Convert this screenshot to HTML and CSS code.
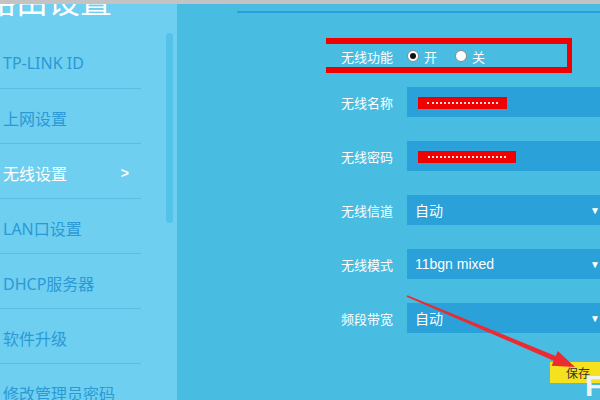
FILE: index.html
```html
<!DOCTYPE html>
<html lang="zh-CN">
<head>
<meta charset="utf-8">
<title>路由设置</title>
<link rel="stylesheet" href="styles.css">
</head>
<body>
<div class="topbar"></div>
<div class="app">
  <aside class="sidebar">
    <div class="title">路由设置</div>
    <ul class="menu">
      <li class="item">TP-LINK ID</li>
      <li class="item">上网设置</li>
      <li class="item active"><span>无线设置</span><span class="chev">&gt;</span></li>
      <li class="item">LAN口设置</li>
      <li class="item">DHCP服务器</li>
      <li class="item">软件升级</li>
      <li class="item">修改管理员密码</li>
    </ul>
    <div class="scrollbar"></div>
  </aside>
  <main class="main">
    <div class="rule"></div>
    <div class="form">
      <div class="row highlight">
        <span class="label">无线功能</span>
        <span class="radios">
          <span class="radio checked"></span><span class="rtext">开</span>
          <span class="radio"></span><span class="rtext">关</span>
        </span>
      </div>
      <div class="row field">
        <span class="label">无线名称</span>
        <span class="input"><span class="mask mask-a"><span class="dots"></span></span></span>
      </div>
      <div class="row field">
        <span class="label">无线密码</span>
        <span class="input"><span class="mask mask-b"><span class="dots"></span></span></span>
      </div>
      <div class="row field">
        <span class="label">无线信道</span>
        <span class="input select"><span>自动</span><span class="caret">▼</span></span>
      </div>
      <div class="row field">
        <span class="label">无线模式</span>
        <span class="input select"><span>11bgn mixed</span><span class="caret">▼</span></span>
      </div>
      <div class="row field">
        <span class="label">频段带宽</span>
        <span class="input select"><span>自动</span><span class="caret">▼</span></span>
      </div>
    </div>
    <div class="actions"><button class="save">保存</button></div>
    <svg class="arrow" width="423" height="396" viewBox="177 4 423 396">
      <polygon fill="#ec2a32" points="407.4,299.3 555.7,360.1 557.8,355.0 575,371 551.6,369.8 553.7,364.7 406.6,300.7"/>
    </svg>
    <span class="mark">F</span>
  </main>
</div>
</body>
</html>
```
FILE: styles.css
```css
html, body {
  margin: 0;
  padding: 0;
  width: 600px;
  height: 400px;
  overflow: hidden;
  font-family: "Noto Sans", "Noto Sans CJK SC", sans-serif;
}
.topbar {
  height: 4px;
  background: #c3c3c3;
}
.app {
  display: flex;
  height: 396px;
}
.sidebar {
  position: relative;
  width: 177px;
  flex: none;
  background: #6ecff0;
  overflow: hidden;
}
.title {
  margin-top: -21px;
  margin-left: -16px;
  font-size: 32px;
  line-height: 32px;
  color: #ffffff;
  font-family: "Noto Sans CJK SC", sans-serif;
  white-space: nowrap;
}
.menu {
  list-style: none;
  margin: 19px 0 0 0;
  padding: 0;
  width: 141px;
}
.item {
  box-sizing: border-box;
  height: 55px;
  padding: 4px 10px 0 3px;
  border-bottom: 1px solid #58bee6;
  display: flex;
  align-items: center;
  justify-content: space-between;
  font-size: 16px;
  color: #2b99d5;
  white-space: nowrap;
}
.item.active {
  color: #ffffff;
}
.chev {
  font-size: 14px;
  font-family: "Liberation Sans", sans-serif;
  font-weight: bold;
  margin-right: 2px;
}
.scrollbar {
  position: absolute;
  left: 166px;
  top: 29px;
  width: 7px;
  height: 190px;
  border-radius: 4px;
  background: #55c2e8;
}
.main {
  position: relative;
  flex: 1;
  background: #48bde1;
  overflow: hidden;
}
.rule {
  margin: 7px 0 0 60px;
  height: 2px;
  background: #2c9fd7;
}
.form {
  margin: 25px 0 0 149px;
  display: flex;
  flex-direction: column;
}
.row {
  display: flex;
  align-items: center;
  gap: 14px;
}
.label {
  width: 67px;
  flex: none;
  text-align: right;
  font-size: 13px;
  color: #ffffff;
  white-space: nowrap;
}
.highlight {
  box-sizing: border-box;
  width: 246px;
  height: 35px;
  border-top: 6px solid #f10000;
  border-bottom: 6px solid #f10000;
  border-right: 5px solid #f10000;
  padding-top: 1px;
}
.radios {
  display: flex;
  align-items: center;
  color: #ffffff;
  font-size: 13px;
}
.radio {
  box-sizing: border-box;
  width: 12px;
  height: 12px;
  border-radius: 50%;
  background: #ffffff;
  border: 1px solid #8a8a8a;
  display: flex;
  align-items: center;
  justify-content: center;
}
.radio.checked::after {
  content: "";
  width: 6px;
  height: 6px;
  border-radius: 50%;
  background: #111111;
}
.rtext {
  margin: 0 18px 0 5px;
}
.field {
  margin-top: 14px;
}
.field + .field {
  margin-top: 24px;
}
.input {
  box-sizing: border-box;
  width: 197px;
  height: 30px;
  flex: none;
  background: #2aa1d9;
  display: flex;
  align-items: center;
  padding: 0 4px 0 8px;
  color: #ffffff;
  font-size: 14px;
  font-family: "Liberation Sans", "Noto Sans CJK SC", sans-serif;
}
.select {
  justify-content: space-between;
}
.caret {
  font-size: 10px;
}
.mask {
  margin-left: 3px;
  margin-top: 1px;
  height: 12px;
  background: #f20000;
  display: flex;
  align-items: center;
  justify-content: center;
}
.mask-a { width: 89px; }
.mask-b { width: 98px; }
.dots {
  width: 80%;
  border-top: 2px dotted #f8e0e0;
}
.actions {
  margin: 29px 0 0 373px;
}
.save {
  width: 56px;
  height: 21px;
  border: none;
  padding: 0;
  background: #f6e11e;
  color: #333333;
  font-size: 12px;
  font-family: "Noto Sans CJK SC", sans-serif;
  display: block;
}
.arrow {
  position: absolute;
  left: 0;
  top: -4px;
}
.mark {
  position: absolute;
  left: 408px;
  top: 364px;
  font-family: "Liberation Sans", sans-serif;
  font-weight: bold;
  font-size: 30px;
  color: #eef3f5;
  line-height: 36px;
}
```
